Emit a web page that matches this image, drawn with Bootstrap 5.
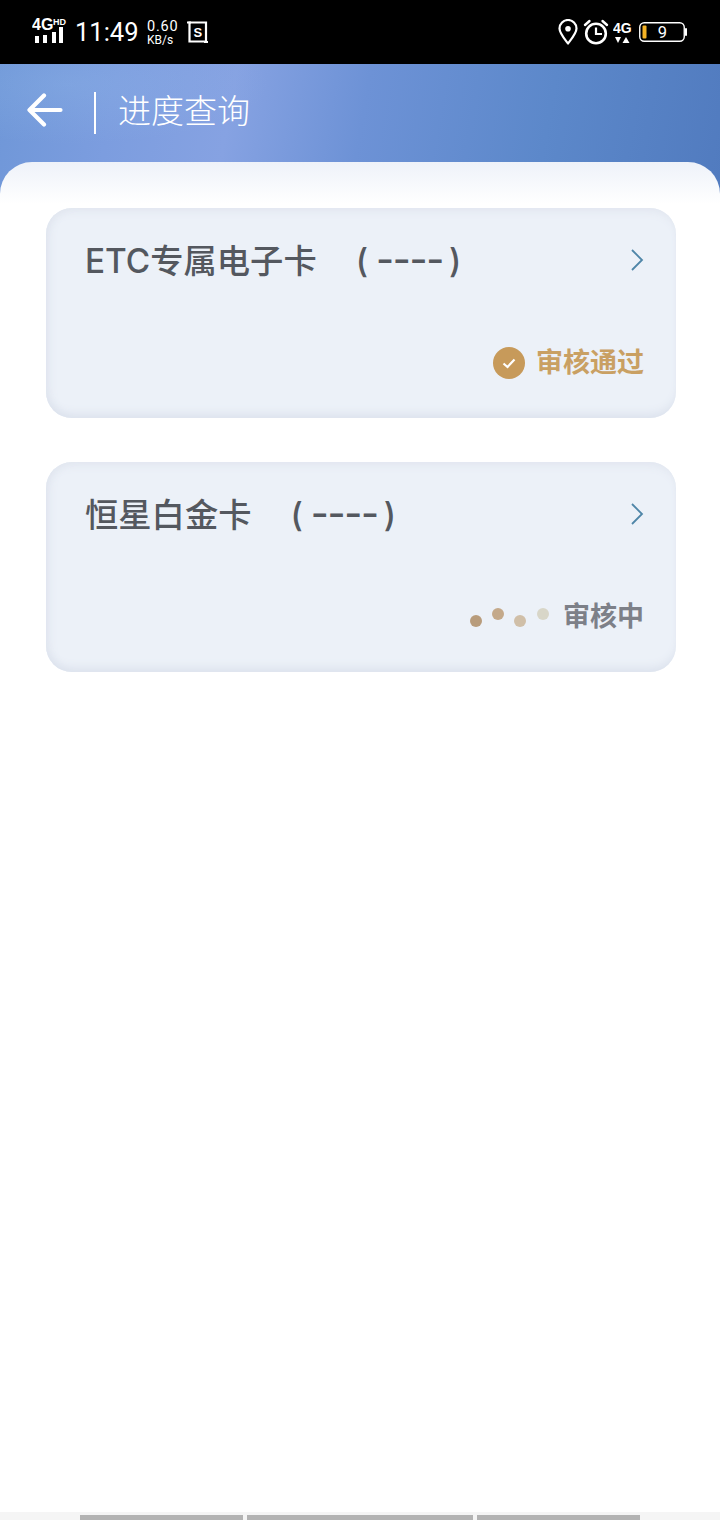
<!DOCTYPE html>
<html lang="zh-CN">
<head>
<meta charset="utf-8">
<title>进度查询</title>
<link href="https://cdn.jsdelivr.net/npm/bootstrap@5.3.0/dist/css/bootstrap.min.css" rel="stylesheet">
<style>
html,body{height:100%;margin:0;background:#fff;overflow:hidden}
body{font-family:"Inter","Noto Sans CJK SC",sans-serif}
.phone{width:720px;height:1520px}
.sbar{height:64px;background:#000;color:#fff;padding:0 32px;flex:none}
.sbar svg{display:block;flex:none}
.netmark{margin-right:7px}
.clock{font-family:"Roboto",sans-serif;font-size:25.5px;line-height:1;padding-top:2px;width:63px;white-space:nowrap}
.speed{font-family:"Roboto",sans-serif;margin-left:9px;width:33px;padding-top:1px}
.speedval{display:block;font-size:14.5px;line-height:14px;letter-spacing:.8px}
.speedunit{display:block;font-size:12px;line-height:12px}
.shot{margin-left:7px}
.stage{flex:1 1 auto;min-height:0;background:radial-gradient(ellipse 200px 60px at 70px 20px,rgba(150,190,235,.25),transparent),linear-gradient(100deg,#6f97d8 0,#7c9ddf 16%,#86a2e2 32%,#6d92d6 50%,#5c88ca 75%,#517bbf 100%);background-repeat:no-repeat;background-position:top;background-size:100% 134px}
.topbar{height:98px;padding-left:27px;color:#fff}
.backmark{margin-bottom:6px}
.divline{width:2px;height:42px;background:#fff;margin:0 22px 0 31px}
.pagename{font-family:"Noto Sans CJK SC",sans-serif;font-size:33px;font-weight:300;line-height:1;margin-bottom:8px}
.sheet{flex:1 1 auto;min-height:0;border-radius:32px 32px 0 0;background:#fff linear-gradient(#eef2f9,#fff 42px) no-repeat top/100% 44px;padding:46px 44px 0 46px;gap:44px}
.apply{height:210px;border-radius:26px;background:#ecf1f8;box-shadow:inset 0 -8px 10px -4px #dce2ed,inset 8px 0 10px -5px #e1e6ef,inset 0 8px 10px -5px #e1e6ef;padding:31px 32px 0 39px}
.cardname{font-size:33.3px;font-weight:500;line-height:42px;height:42px;color:#54585f;white-space:nowrap}
.serial{margin-left:39px}
.dash{font-size:39px;line-height:1;letter-spacing:-1.3px;margin:0 6px 0 8px}
.state{margin-top:61px;height:42px;font-size:27px;font-weight:700;line-height:1}
.state span{margin-bottom:2px}
.passed{color:#c9a063;gap:11px}
.pending{color:#7d8088;gap:13px}
.homebar{height:8px;background:#f5f5f5;padding:3px 80px 0;gap:4px;flex:none}
.seg{height:5px;background:#b3b3b3}
</style>
</head>
<body>
<div class="phone d-flex flex-column">
  <div class="sbar d-flex align-items-center">
    <svg class="netmark" width="36" height="36" viewBox="0 -4 36 36" aria-hidden="true"><text x="0" y="12" font-family="Liberation Sans" font-size="16" font-weight="700" fill="#fff">4G</text><text x="21" y="7" font-family="Liberation Sans" font-size="9" font-weight="700" fill="#fff">HD</text><g fill="#fff"><rect x="3" y="18" width="4" height="7"/><rect x="11" y="17" width="4" height="8"/><rect x="20" y="14" width="4" height="11"/><rect x="27" y="9" width="4" height="16"/></g></svg>
    <span class="clock">11:49</span>
    <div class="speed"><span class="speedval">0.60</span><span class="speedunit">KB/s</span></div>
    <svg class="shot" width="22" height="24" viewBox="0 0 22 24" aria-hidden="true"><path d="M2.500 2.500H19V21.500H2.500Z" fill="none" stroke="#fff" stroke-width="2.200"/><path d="M0 2.500H4M17 22H21" stroke="#fff" stroke-width="2"/><text x="10.800" y="17" text-anchor="middle" font-family="Liberation Sans" font-size="13" font-weight="700" fill="#fff">S</text></svg>
    <div class="ms-auto d-flex align-items-center">
      <svg width="22" height="26" viewBox="0 0 22 26" aria-hidden="true"><path d="M11 24.500C6 18 2.500 14 2.500 9.500a8.500 8.500 0 0 1 17 0C19.500 14 16 18 11 24.500Z" fill="none" stroke="#fff" stroke-width="2.200" stroke-linejoin="round"/><circle cx="11" cy="9.800" r="2.800" fill="#fff"/></svg>
      <svg class="ms-1" width="26" height="26" viewBox="0 0 26 26" aria-hidden="true"><circle cx="13" cy="14.500" r="9.800" fill="none" stroke="#fff" stroke-width="2.600"/><path d="M13 8.500V15H19" fill="none" stroke="#fff" stroke-width="2.200"/><path d="M2 6 6.500 2M24 6 19.500 2" stroke="#fff" stroke-width="2.400" stroke-linecap="round"/></svg>
      <svg class="ms-1" width="22" height="26" viewBox="0 0 22 26" aria-hidden="true"><text x="0" y="13.500" font-family="Liberation Sans" font-size="14" font-weight="700" fill="#fff">4G</text><path d="M2 18H8L5 24Z" fill="#fff"/><path d="M9.500 24H16.500L13 18Z" fill="#fff"/></svg>
      <svg class="ms-1" width="49" height="22" viewBox="0 0 49 22" aria-hidden="true"><rect x=".75" y="1.750" width="44.500" height="18.500" rx="4.500" fill="none" stroke="#fff" stroke-width="1.400"/><rect x="3.500" y="4.500" width="4" height="13" rx="1" fill="#f5b324"/><path d="M47 8v6" stroke="#fff" stroke-width="2" stroke-linecap="round"/><text x="23.500" y="16.500" text-anchor="middle" font-family="Roboto" font-size="16.500" fill="#fff">9</text></svg>
    </div>
  </div>
  <div class="stage d-flex flex-column">
    <div class="topbar d-flex align-items-center">
      <svg class="backmark" width="36" height="36" viewBox="0 0 36 36" aria-hidden="true"><path d="M33.500 18H3M17 3.500 2.500 18 17 32.500" fill="none" stroke="#fff" stroke-width="4.200" stroke-linecap="round" stroke-linejoin="round"/></svg>
      <div class="divline"></div>
      <span class="pagename">进度查询</span>
    </div>
    <div class="sheet d-flex flex-column">
      <div class="apply">
        <div class="d-flex justify-content-between align-items-center">
          <div class="cardname">ETC专属电子卡<span class="serial">(<span class="dash">----</span>)</span></div>
          <svg width="14" height="24" viewBox="0 0 14 24" aria-hidden="true"><path d="M2 2 12 12 2 22" fill="none" stroke="#4f86a8" stroke-width="1.800"/></svg>
        </div>
        <div class="state passed d-flex justify-content-end align-items-center">
          <svg width="32" height="32" viewBox="0 0 32 32" aria-hidden="true"><circle cx="16" cy="16" r="16" fill="#c79a5a"/><path d="M10.500 16.500 14.500 20 21.500 12.500" fill="none" stroke="#fff" stroke-width="2.200"/></svg>
          <span>审核通过</span>
        </div>
      </div>
      <div class="apply">
        <div class="d-flex justify-content-between align-items-center">
          <div class="cardname">恒星白金卡<span class="serial">(<span class="dash">----</span>)</span></div>
          <svg width="14" height="24" viewBox="0 0 14 24" aria-hidden="true"><path d="M2 2 12 12 2 22" fill="none" stroke="#4f86a8" stroke-width="1.800"/></svg>
        </div>
        <div class="state pending d-flex justify-content-end align-items-center">
          <svg width="80" height="30" viewBox="0 0 80 30" aria-hidden="true"><circle cx="6" cy="19" r="6" fill="#b89c7c"/><circle cx="28" cy="12" r="6" fill="#c4a98a"/><circle cx="50" cy="19" r="6" fill="#d0bfa8"/><circle cx="73" cy="12" r="6" fill="#d8d6c8"/></svg>
          <span>审核中</span>
        </div>
      </div>
    </div>
  </div>
  <div class="homebar d-flex">
    <div class="seg" style="width:163px"></div>
    <div class="seg" style="width:226px"></div>
    <div class="seg" style="width:163px"></div>
  </div>
</div>
<script src="https://cdn.jsdelivr.net/npm/bootstrap@5.3.0/dist/js/bootstrap.bundle.min.js"></script>
</body>
</html>
